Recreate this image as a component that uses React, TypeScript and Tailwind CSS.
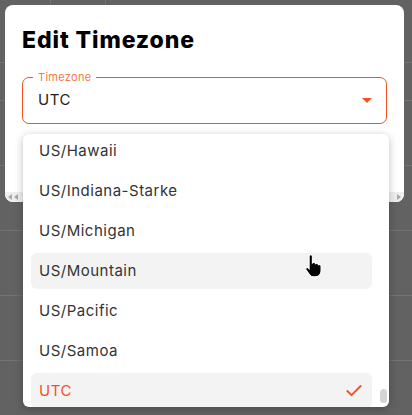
import React from 'react';
import { Check } from 'lucide-react';

const zones = [
  'US/Hawaii',
  'US/Indiana-Starke',
  'US/Michigan',
  'US/Mountain',
  'US/Pacific',
  'US/Samoa',
  'UTC',
];

const HandCursor = () => (
  <svg width="20" height="26" viewBox="0 0 18 24" className="absolute left-[304px] top-[253px]">
    <path
      d="M6 1.5c.8 0 1.5.7 1.5 1.5v6.2c.3-.4.8-.6 1.3-.6.8 0 1.4.6 1.5 1.3.3-.3.7-.5 1.2-.5.8 0 1.4.6 1.5 1.4.3-.2.6-.3 1-.3.9 0 1.5.7 1.5 1.5v4.5c0 3-2.2 5.5-5.2 5.5H8.6c-1.5 0-2.8-.7-3.7-1.9L1.6 15.6c-.5-.7-.3-1.6.4-2 .6-.4 1.300-.3 1.8.2l.7.8V3c0-.8.7-1.5 1.5-1.5z"
      fill="#000"
      stroke="#fff"
      strokeWidth="1"
    />
  </svg>
);

export default function App() {
  const rowLines = [62, 100, 165, 230, 295, 360];

  return (
    <div
      className="relative w-[412px] h-[415px] overflow-hidden bg-[#626262]"
      style={{ fontFamily: 'Inter, "Noto Sans", sans-serif' }}
    >
      {/* dimmed table behind the dialog */}
      {rowLines.map((y) => (
        <div key={y} className="absolute left-0 right-0 h-px bg-[#727272]" style={{ top: y }} />
      ))}
      <div className="absolute left-[50px] top-0 w-px h-[5px] bg-[#727272]" />
      <div className="absolute left-[105px] top-0 w-px h-[5px] bg-[#727272]" />

      {/* dialog */}
      <div className="absolute left-[5px] top-[5px] w-[399px] h-[197px] bg-white rounded-lg flex flex-col overflow-hidden">
        <div className="flex-1 px-[17px] pt-[20px]">
          <h2 className="text-[23px] font-extrabold text-black leading-[30px] tracking-[0.9px]">Edit Timezone</h2>
          <div className="relative mt-[22px] h-[47px] rounded-[7px] border border-[#f4511e] flex items-center pl-[15px] pr-[14px]">
            <span className="absolute -top-[8px] left-[10px] bg-white px-[5px] text-[11px] leading-[14px] tracking-[0.3px] text-[#f7794b]">
              Timezone
            </span>
            <span className="flex-1 text-[15px] tracking-[0.5px] text-[#222]">UTC</span>
            <span className="w-0 h-0 border-l-[5px] border-r-[5px] border-t-[5px] border-l-transparent border-r-transparent border-t-[#f4511e]" />
          </div>
        </div>
        <div className="h-[10px] bg-[#efefef] flex items-center justify-between px-[3px]">
          <div className="flex gap-[2px]">
            <span className="w-0 h-0 border-t-[3px] border-b-[3px] border-r-[4px] border-t-transparent border-b-transparent border-r-[#a8a8a8]" />
            <span className="w-0 h-0 border-t-[3px] border-b-[3px] border-r-[4px] border-t-transparent border-b-transparent border-r-[#a8a8a8]" />
          </div>
          <span className="w-0 h-0 border-t-[3px] border-b-[3px] border-l-[4px] border-t-transparent border-b-transparent border-l-[#a8a8a8]" />
        </div>
      </div>

      {/* open select menu */}
      <div className="absolute left-[23px] top-[134px] w-[366px] h-[273px] bg-white rounded-md shadow-[0_2px_8px_rgba(0,0,0,0.25)] overflow-hidden flex">
        <ul className="flex-1 flex flex-col gap-1 pl-2 pr-[8px] -mt-px">
          {zones.map((z) => {
            const hover = z === 'US/Mountain';
            const selected = z === 'UTC';
            return (
              <li
                key={z}
                className={`h-[36px] shrink-0 rounded-md flex items-center justify-between pl-2 pr-[8px] text-[15px] tracking-[0.5px] ${
                  hover || selected ? 'bg-[#f3f3f3]' : ''
                } ${selected ? 'text-[#f4511e]' : 'text-[#333]'}`}
              >
                <span>{z}</span>
                {selected && <Check size={20} strokeWidth={2.2} className="text-[#f4511e]" />}
              </li>
            );
          })}
        </ul>
        <div className="w-[9px] flex flex-col justify-end pb-[4px]">
          <div className="w-[7px] h-[14px] rounded-full bg-[#d4d4d4]" />
        </div>
      </div>

      <HandCursor />
    </div>
  );
}
